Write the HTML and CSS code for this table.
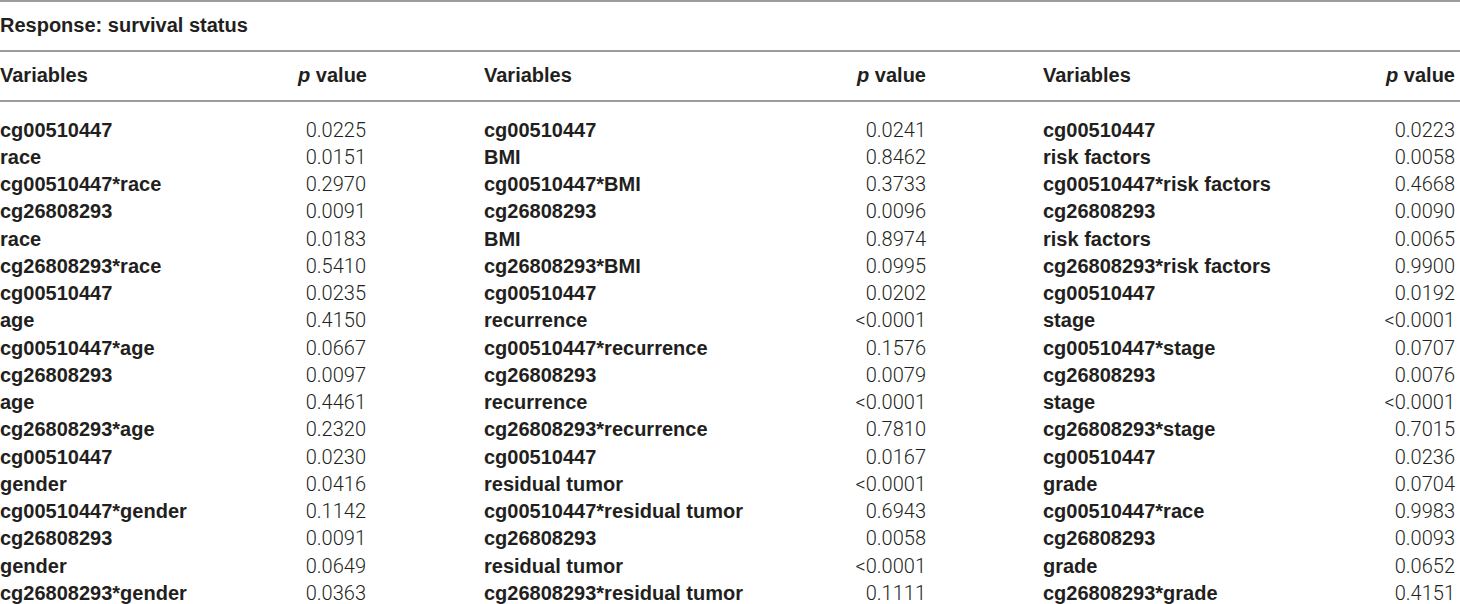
FILE: index.html
```html
<!DOCTYPE html>
<html>
<head>
<meta charset="utf-8">
<link rel="stylesheet" href="styles.css">
</head>
<body>
<div class="tbl">
  <div class="title">Response: survival status</div>
  <div class="grid head">
    <div class="v">Variables</div><div class="p"><i>p</i> value</div>
    <div class="v">Variables</div><div class="p"><i>p</i> value</div>
    <div class="v">Variables</div><div class="p"><i>p</i> value</div>
  </div>
  <div class="grid body">
    <div class="v">cg00510447</div><div class="p">0.0225</div><div class="v">cg00510447</div><div class="p">0.0241</div><div class="v">cg00510447</div><div class="p">0.0223</div>
    <div class="v">race</div><div class="p">0.0151</div><div class="v">BMI</div><div class="p">0.8462</div><div class="v">risk factors</div><div class="p">0.0058</div>
    <div class="v">cg00510447*race</div><div class="p">0.2970</div><div class="v">cg00510447*BMI</div><div class="p">0.3733</div><div class="v">cg00510447*risk factors</div><div class="p">0.4668</div>
    <div class="v">cg26808293</div><div class="p">0.0091</div><div class="v">cg26808293</div><div class="p">0.0096</div><div class="v">cg26808293</div><div class="p">0.0090</div>
    <div class="v">race</div><div class="p">0.0183</div><div class="v">BMI</div><div class="p">0.8974</div><div class="v">risk factors</div><div class="p">0.0065</div>
    <div class="v">cg26808293*race</div><div class="p">0.5410</div><div class="v">cg26808293*BMI</div><div class="p">0.0995</div><div class="v">cg26808293*risk factors</div><div class="p">0.9900</div>
    <div class="v">cg00510447</div><div class="p">0.0235</div><div class="v">cg00510447</div><div class="p">0.0202</div><div class="v">cg00510447</div><div class="p">0.0192</div>
    <div class="v">age</div><div class="p">0.4150</div><div class="v">recurrence</div><div class="p">&lt;0.0001</div><div class="v">stage</div><div class="p">&lt;0.0001</div>
    <div class="v">cg00510447*age</div><div class="p">0.0667</div><div class="v">cg00510447*recurrence</div><div class="p">0.1576</div><div class="v">cg00510447*stage</div><div class="p">0.0707</div>
    <div class="v">cg26808293</div><div class="p">0.0097</div><div class="v">cg26808293</div><div class="p">0.0079</div><div class="v">cg26808293</div><div class="p">0.0076</div>
    <div class="v">age</div><div class="p">0.4461</div><div class="v">recurrence</div><div class="p">&lt;0.0001</div><div class="v">stage</div><div class="p">&lt;0.0001</div>
    <div class="v">cg26808293*age</div><div class="p">0.2320</div><div class="v">cg26808293*recurrence</div><div class="p">0.7810</div><div class="v">cg26808293*stage</div><div class="p">0.7015</div>
    <div class="v">cg00510447</div><div class="p">0.0230</div><div class="v">cg00510447</div><div class="p">0.0167</div><div class="v">cg00510447</div><div class="p">0.0236</div>
    <div class="v">gender</div><div class="p">0.0416</div><div class="v">residual tumor</div><div class="p">&lt;0.0001</div><div class="v">grade</div><div class="p">0.0704</div>
    <div class="v">cg00510447*gender</div><div class="p">0.1142</div><div class="v">cg00510447*residual tumor</div><div class="p">0.6943</div><div class="v">cg00510447*race</div><div class="p">0.9983</div>
    <div class="v">cg26808293</div><div class="p">0.0091</div><div class="v">cg26808293</div><div class="p">0.0058</div><div class="v">cg26808293</div><div class="p">0.0093</div>
    <div class="v">gender</div><div class="p">0.0649</div><div class="v">residual tumor</div><div class="p">&lt;0.0001</div><div class="v">grade</div><div class="p">0.0652</div>
    <div class="v">cg26808293*gender</div><div class="p">0.0363</div><div class="v">cg26808293*residual tumor</div><div class="p">0.1111</div><div class="v">cg26808293*grade</div><div class="p">0.4151</div>
  </div>
</div>
</body>
</html>
```

FILE: styles.css
```css
html, body {
  margin: 0;
  padding: 0;
  background: #ffffff;
}

.tbl {
  width: 1460px;
  font-family: "Liberation Sans", Arial, sans-serif;
  font-size: 20px;
  line-height: 27.1px;
  color: #231f20;
}

.title {
  border-top: 2px solid #9b9b9b;
  border-bottom: 2px solid #9b9b9b;
  padding-top: 9.7px;
  height: 38.3px;
  font-weight: bold;
}

.grid {
  display: grid;
  grid-template-columns: 290px 194px 316px 243px 297px 120px;
}

.head {
  border-bottom: 2px solid #9b9b9b;
  padding-top: 9.7px;
  height: 38.3px;
  font-weight: bold;
}

.head i {
  font-style: italic;
}

.body {
  padding-top: 14.7px;
  grid-auto-rows: 27.25px;
  line-height: 27.25px;
}

.v {
  font-weight: bold;
  white-space: nowrap;
}

.p {
  text-align: right;
  white-space: nowrap;
}

.head > .p:nth-child(2) { padding-right: 117px; }
.head > .p:nth-child(4) { padding-right: 117px; }
.head > .p:nth-child(6) { padding-right: 5px; }

.body .p {
  font-family: Roboto, "Liberation Sans", sans-serif;
  font-weight: 300;
}

.body > .p:nth-child(6n+2) { padding-right: 118px; }
.body > .p:nth-child(6n+4) { padding-right: 117px; }
.body > .p:nth-child(6n) { padding-right: 5px; }
```
